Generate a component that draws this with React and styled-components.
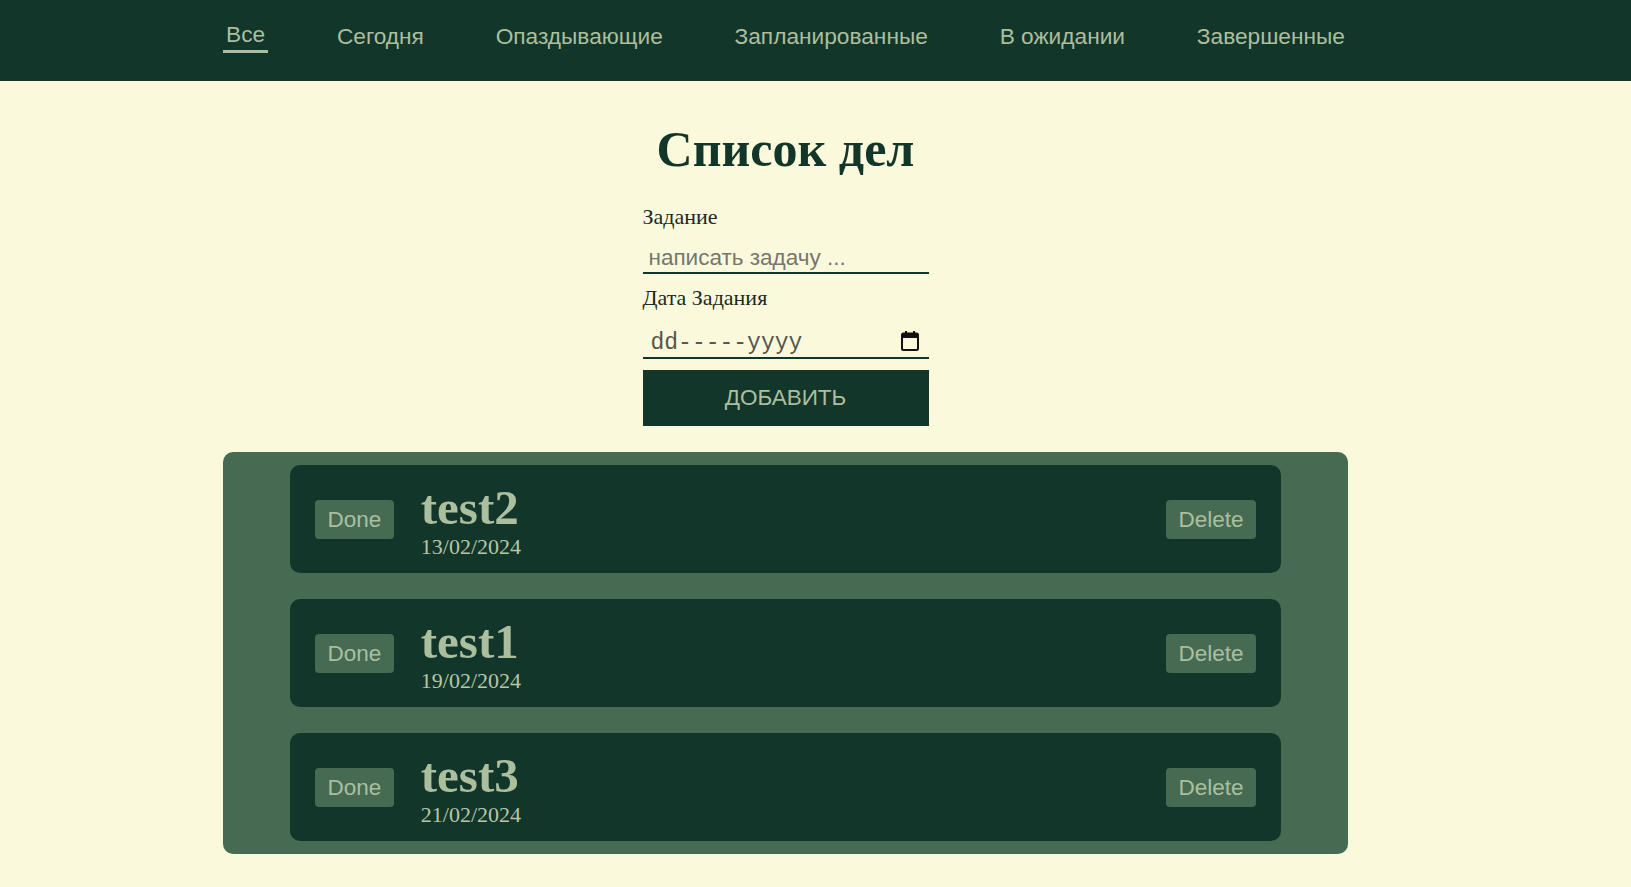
import styled, { createGlobalStyle } from "styled-components";

const GlobalStyle = createGlobalStyle`
body {
  margin: 0;
  background-color: #fbf9dc;
  font-family: "Liberation Serif", "Times New Roman", serif;
}
`;

const Header = styled.header`
background-color: #13362b;
height: 81px;
padding-right: 60px;
`;

const Nav = styled.nav`
width: 1125px;
margin: 0 auto;
height: 100%;
display: flex;
justify-content: space-between;
align-items: flex-start;
padding-top: 22px;
box-sizing: border-box;
`;

const NavLink = styled.a`
font-family: "Liberation Sans", Arial, sans-serif;
font-size: 22.7px;
line-height: 25px;
color: #abbf9e;
text-decoration: none;
padding: ${(p) => (p.$active ? "0" : "2px")} 3px 3px;
border-bottom: 3px solid ${(p) => (p.$active ? "#abbf9e" : "transparent")};
cursor: pointer;
`;

const Main = styled.main`
padding-right: 60px;
padding-bottom: 33px;
`;

const Content = styled.div`
width: 1125px;
margin: 0 auto;
display: flex;
flex-direction: column;
align-items: center;
`;

const Title = styled.h1`
margin: 40px 0 0;
font-size: 50px;
line-height: 1.15;
font-weight: 700;
color: #13362b;
`;

const Form = styled.form`
width: 286px;
display: flex;
flex-direction: column;
margin-top: 25px;
`;

const Label = styled.label`
font-size: 22px;
line-height: 1.15;
color: #1b2a22;
margin-top: ${(p) => p.$top || 0}px;
`;

const TextInput = styled.input`
margin-top: 10px;
font-family: "Liberation Sans", Arial, sans-serif;
font-size: 22.5px;
line-height: 25px;
padding: 6px 6px 2px;
border: none;
border-bottom: 2px solid #13362b;
background: transparent;
color: #13362b;
outline: none;

&::placeholder {
  color: #767670;
}
`;

const DateField = styled.div`
margin-top: 14px;
display: flex;
align-items: center;
justify-content: space-between;
padding: 6px 10px 1px 8px;
border-bottom: 2px solid #13362b;
`;

const DateText = styled.span`
font-family: "Liberation Mono", "Courier New", monospace;
font-size: 23px;
line-height: 26px;
color: #55554d;
`;

const CalendarIcon = styled.svg`
margin-bottom: 4px;
`;

const AddButton = styled.button`
margin-top: 11px;
height: 56px;
border: none;
background-color: #13362b;
color: #abbf9e;
font-family: "Liberation Sans", Arial, sans-serif;
font-size: 22.5px;
cursor: pointer;
`;

const TaskList = styled.section`
margin-top: 26px;
width: 100%;
box-sizing: border-box;
background-color: #466b52;
border-radius: 10px;
padding: 13px 67px;
display: flex;
flex-direction: column;
gap: 26px;
`;

const TaskCard = styled.div`
height: 108px;
background-color: #13362b;
border-radius: 10px;
padding: 0 25px;
display: flex;
align-items: center;
`;

const SmallButton = styled.button`
background-color: #466b52;
color: #abbf9e;
border: none;
border-radius: 4px;
padding: 7px 12.5px;
font-family: "Liberation Sans", Arial, sans-serif;
font-size: 22.5px;
line-height: 25px;
cursor: pointer;
margin-left: ${(p) => (p.$right ? "auto" : "0")};
`;

const TaskText = styled.div`
align-self: flex-start;
margin: 18px 0 0 27px;
display: flex;
flex-direction: column;
`;

const TaskName = styled.h2`
margin: 0;
font-size: 49px;
line-height: 1;
font-weight: 700;
color: #abbf9e;
`;

const TaskDate = styled.span`
margin-top: 2px;
font-size: 22px;
line-height: 1.2;
color: #b7c6a6;
`;

const links = [
  "Все",
  "Сегодня",
  "Опаздывающие",
  "Запланированные",
  "В ожидании",
  "Завершенные",
];

const tasks = [
  { name: "test2", date: "13/02/2024" },
  { name: "test1", date: "19/02/2024" },
  { name: "test3", date: "21/02/2024" },
];

const App = () => {
  return (
    <>
      <GlobalStyle />
      <Header>
        <Nav>
          {links.map((l, i) => (
            <NavLink key={l} $active={i === 0}>
              {l}
            </NavLink>
          ))}
        </Nav>
      </Header>
      <Main>
        <Content>
          <Title>Список дел</Title>
          <Form onSubmit={(e) => e.preventDefault()}>
            <Label>Задание</Label>
            <TextInput placeholder="написать задачу ..." />
            <Label $top={11}>Дата Задания</Label>
            <DateField>
              <DateText>dd-----yyyy</DateText>
              <CalendarIcon width="18" height="20" viewBox="0 0 18 20">
                <rect x="4" y="0" width="2" height="3" fill="#111" />
                <rect x="12" y="0" width="2" height="3" fill="#111" />
                <path
                  fill="#111"
                  fillRule="evenodd"
                  d="M2.5 1.5h13a2.5 2.5 0 0 1 2.5 2.5v13.5a2.5 2.5 0 0 1-2.5 2.5h-13A2.5 2.5 0 0 1 0 17.5V4a2.5 2.5 0 0 1 2.5-2.5zM2 7v10.5c0 .3.2.5.5.5h13c.3 0 .5-.2.5-.5V7z"
                />
              </CalendarIcon>
            </DateField>
            <AddButton type="submit">ДОБАВИТЬ</AddButton>
          </Form>
          <TaskList>
            {tasks.map((t) => (
              <TaskCard key={t.name}>
                <SmallButton>Done</SmallButton>
                <TaskText>
                  <TaskName>{t.name}</TaskName>
                  <TaskDate>{t.date}</TaskDate>
                </TaskText>
                <SmallButton $right>Delete</SmallButton>
              </TaskCard>
            ))}
          </TaskList>
        </Content>
      </Main>
    </>
  );
};

export default App;
